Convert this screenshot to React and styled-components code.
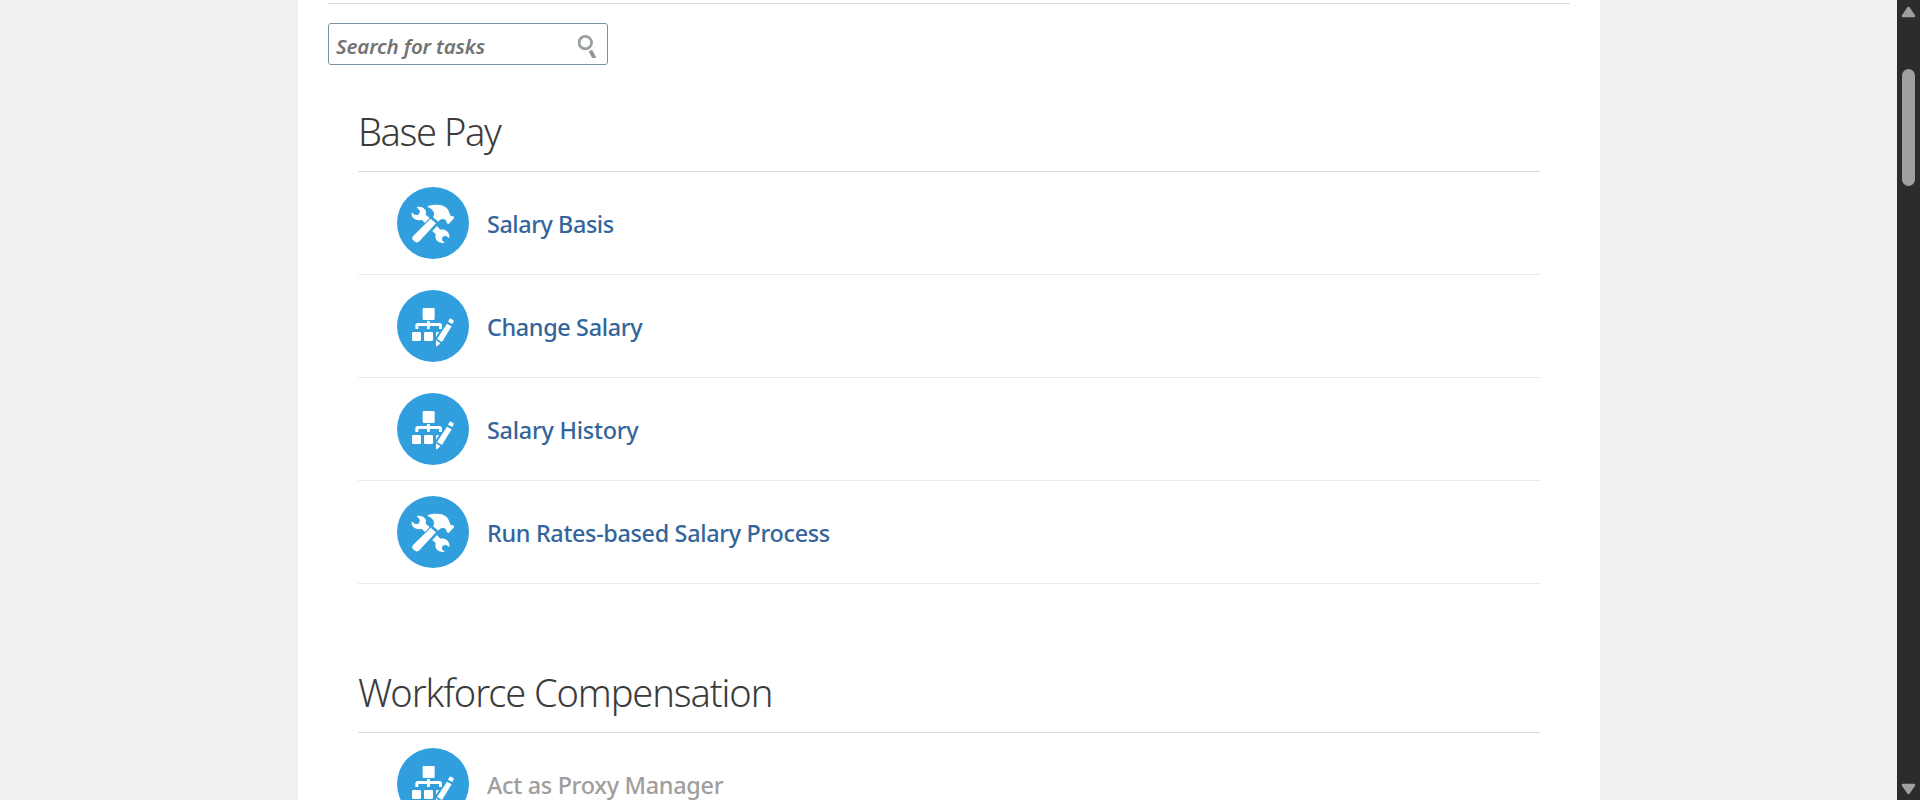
import React from "react";
import styled, { createGlobalStyle } from "styled-components";

const GlobalStyle = createGlobalStyle`
  * { box-sizing: border-box; }
  body {
    margin: 0;
    background: #f0f0f0;
    font-family: "Segoe UI", "Noto Sans", "Open Sans", sans-serif;
    overflow: hidden;
  }
`;

const Page = styled.div`
  display: flex;
  width: 1920px;
  height: 800px;
  overflow: hidden;
`;

const Content = styled.main`
  flex: 1;
  display: flex;
  padding-left: 298px;
  overflow: hidden;
`;

const Panel = styled.div`
  width: 1302px;
  flex-shrink: 0;
  padding: 3px 30px 0;
  background: #fff;
`;

const Divider = styled.div`
  height: 1px;
  background: #d6dde2;
`;

const SearchBox = styled.label`
  display: flex;
  align-items: center;
  justify-content: space-between;
  width: 280px;
  height: 42px;
  margin-top: 19px;
  padding: 0 9px 0 7px;
  border: 1px solid #7d919f;
  border-radius: 3px;
`;

const Placeholder = styled.span`
  padding-top: 3px;
  font-size: 20.5px;
  line-height: 28px;
  font-style: italic;
  font-weight: 600;
  letter-spacing: -0.15px;
  color: #737373;
  white-space: nowrap;
`;

const Section = styled.section`
  padding: 0 30px;
  margin-top: ${(p) => p.$gap}px;
`;

const Heading = styled.h2`
  height: 78px;
  margin: 0;
  border-bottom: 1px solid #d6dde2;
  font-size: 38px;
  line-height: 75px;
  font-weight: 300;
  letter-spacing: ${(p) => p.$tracking}px;
  color: #3b3b3b;
  white-space: nowrap;
`;

const TaskList = styled.ul`
  margin: 0;
  padding: 0;
  list-style: none;
`;

const TaskRow = styled.li`
  display: flex;
  align-items: center;
  gap: 18px;
  height: 103px;
  padding-left: 39px;
  border-bottom: 1px solid #e9ebed;
`;

const TaskIcon = styled.svg`
  width: 72px;
  height: 72px;
  flex-shrink: 0;
`;

const TaskLabel = styled.span`
  padding-top: 1px;
  font-size: 23.4px;
  line-height: 32px;
  font-weight: 550;
  letter-spacing: ${(p) => p.$tracking}px;
  color: ${(p) => (p.$disabled ? "#9e9e9e" : "#33659a")};
  white-space: nowrap;
`;

const Scrollbar = styled.aside`
  display: flex;
  flex-direction: column;
  align-items: center;
  width: 23px;
  padding: 6px 0 5px;
  background: #2c2c2c;
`;

const Thumb = styled.div`
  width: 13px;
  height: 117px;
  margin: 51px 0 auto;
  border-radius: 7px;
  background: #9f9f9f;
`;

const Arrow = styled.svg`
  width: 15px;
  height: 12px;
  flex-shrink: 0;
  transform: ${(p) => (p.$down ? "rotate(180deg)" : "none")};
`;

const ScrollArrow = ({ down }) => (
  <Arrow $down={down} viewBox="0 0 15 12">
    <path d="M7.5 2 13 10H2Z" fill="#9f9f9f" stroke="#9f9f9f" strokeWidth="2.6" strokeLinejoin="round" />
  </Arrow>
);

const SearchIcon = () => (
  <svg width="20" height="28" viewBox="0 0 20 28">
    <circle cx="7.3" cy="12.6" r="6.3" fill="none" stroke="#9a9fa2" strokeWidth="2.8" />
    <path d="m12.4 20.6 4.2 8" stroke="#8e9498" strokeWidth="3.8" />
  </svg>
);

const ToolsIcon = () => (
  <TaskIcon viewBox="21 21 216 216">
    <circle cx="129" cy="129" r="108" fill="#319fdd" />
    <g fill="#fff">
      <path d="M80 81C92 78 105 83 108 94L107 104L119 114L105 129L95 119C82 124 68 117 65 106L65 97L75 105L86 104L90 93Z" />
      <path d="M112 80C116 75 127 74 140 74C162 74 174 83 178 98L182 108L191 109L192 115L176 132L171 130L167 119C157 115 150 117 145 125L129 112C135 102 134 90 112 80Z" />
      <path d="M122 116L138 130L88 184Q81 190 75 185L68 179Q64 173 70 167Z" />
      <path d="M141 138L151 149C165 146 176 154 178 166L178 174L167 167L157 171L156 181L164 188C151 191 137 184 136 171L137 163L127 153Z" />
    </g>
  </TaskIcon>
);

const OrgEditIcon = () => (
  <TaskIcon viewBox="21 18 216 216">
    <circle cx="129" cy="126" r="108" fill="#319fdd" />
    <g fill="#fff">
      <rect x="98" y="72" width="36" height="36" rx="4" />
      <rect x="111" y="111" width="8.5" height="24" />
      <path d="M76 135V125Q76 117 84 117H148Q156 117 156 125V135H147V126H85V135Z" />
      <rect x="66" y="144" width="27" height="27" rx="4" />
      <rect x="102" y="144" width="27" height="27" rx="4" />
      <path d="M138 158V147Q138 144 142 144H147Z" />
      <path d="M179 104Q181 103 183 104L190 108Q192 110 191 112L187 120L174 113Z" />
      <path d="M171 119L185 127L156 174L141 165Z" />
      <path d="M138 169L151 178L142 186Q138 188 138 184Z" />
    </g>
  </TaskIcon>
);

const sections = [
  {
    title: "Base Pay",
    gap: 29,
    tracking: -1.4,
    tasks: [
      { name: "Salary Basis", icon: ToolsIcon, tracking: -0.45 },
      { name: "Change Salary", icon: OrgEditIcon, tracking: -0.35 },
      { name: "Salary History", icon: OrgEditIcon, tracking: -0.25 },
      { name: "Run Rates-based Salary Process", icon: ToolsIcon, tracking: -0.33 },
    ],
  },
  {
    title: "Workforce Compensation",
    gap: 71,
    tracking: -1.1,
    tasks: [{ name: "Act as Proxy Manager", icon: OrgEditIcon, tracking: -0.29, disabled: true }],
  },
];

export default function App() {
  return (
    <Page>
      <GlobalStyle />
      <Content>
        <Panel>
          <Divider />
          <SearchBox>
            <Placeholder>Search for tasks</Placeholder>
            <SearchIcon />
          </SearchBox>
          {sections.map((s) => (
            <Section key={s.title} $gap={s.gap}>
              <Heading $tracking={s.tracking}>{s.title}</Heading>
              <TaskList>
                {s.tasks.map((t) => (
                  <TaskRow key={t.name}>
                    <t.icon />
                    <TaskLabel $disabled={t.disabled} $tracking={t.tracking}>
                      {t.name}
                    </TaskLabel>
                  </TaskRow>
                ))}
              </TaskList>
            </Section>
          ))}
        </Panel>
      </Content>
      <Scrollbar>
        <ScrollArrow />
        <Thumb />
        <ScrollArrow down />
      </Scrollbar>
    </Page>
  );
}
